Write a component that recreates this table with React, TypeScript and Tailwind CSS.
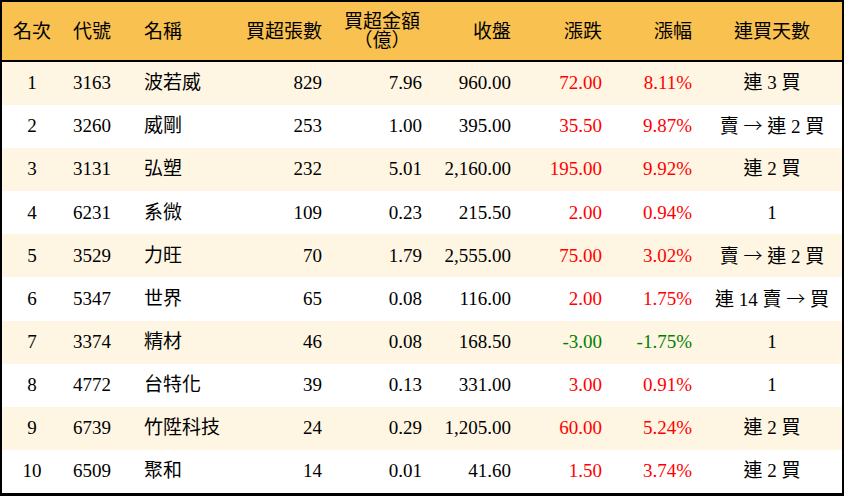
const rows = [
  { rank: "1", code: "3163", name: "波若威", lots: "829", amount: "7.96", close: "960.00", chg: "72.00", pct: "8.11%", streak: "連 3 買" },
  { rank: "2", code: "3260", name: "威剛", lots: "253", amount: "1.00", close: "395.00", chg: "35.50", pct: "9.87%", streak: "賣 → 連 2 買" },
  { rank: "3", code: "3131", name: "弘塑", lots: "232", amount: "5.01", close: "2,160.00", chg: "195.00", pct: "9.92%", streak: "連 2 買" },
  { rank: "4", code: "6231", name: "系微", lots: "109", amount: "0.23", close: "215.50", chg: "2.00", pct: "0.94%", streak: "1" },
  { rank: "5", code: "3529", name: "力旺", lots: "70", amount: "1.79", close: "2,555.00", chg: "75.00", pct: "3.02%", streak: "賣 → 連 2 買" },
  { rank: "6", code: "5347", name: "世界", lots: "65", amount: "0.08", close: "116.00", chg: "2.00", pct: "1.75%", streak: "連 14 賣 → 買" },
  { rank: "7", code: "3374", name: "精材", lots: "46", amount: "0.08", close: "168.50", chg: "-3.00", pct: "-1.75%", streak: "1" },
  { rank: "8", code: "4772", name: "台特化", lots: "39", amount: "0.13", close: "331.00", chg: "3.00", pct: "0.91%", streak: "1" },
  { rank: "9", code: "6739", name: "竹陞科技", lots: "24", amount: "0.29", close: "1,205.00", chg: "60.00", pct: "5.24%", streak: "連 2 買" },
  { rank: "10", code: "6509", name: "聚和", lots: "14", amount: "0.01", close: "41.60", chg: "1.50", pct: "3.74%", streak: "連 2 買" },
];

const cols = "grid grid-cols-[60px_71px_107px_92px_100px_89px_91px_90px_140px] items-center";

// the arrow is drawn full-width, like the CJK glyphs around it
function Streak({ text }: { text: string }) {
  const parts = text.split("→");
  return (
    <>
      {parts.map((p, i) => (
        <span key={i}>
          {i > 0 && <span className="font-['Noto_Sans_CJK_TC',sans-serif] font-light">→</span>}
          {p}
        </span>
      ))}
    </>
  );
}

export default function App() {
  return (
    <div className="w-[844px] h-[496px] flex flex-col border-2 border-b-[3px] border-black bg-white text-black text-[19px] font-['Liberation_Serif','Noto_Sans_CJK_TC',serif]">
      <div className={`${cols} h-[60px] shrink-0 border-b-2 border-black bg-[#f9c14f] leading-[19px]`}>
        <div className="text-center">名次</div>
        <div className="pl-[11px]">代號</div>
        <div className="pl-[11px]">名稱</div>
        <div className="pr-[10px] text-right">買超張數</div>
        <div className="text-center">
          <div>買超金額</div>
          <div>（億）</div>
        </div>
        <div className="pr-[10px] text-right">收盤</div>
        <div className="pr-[10px] text-right">漲跌</div>
        <div className="pr-[10px] text-right">漲幅</div>
        <div className="text-center">連買天數</div>
      </div>
      <div className="flex-1 flex flex-col">
        {rows.map((r, i) => {
          const up = !r.chg.startsWith("-");
          const tone = up ? "text-[#ff0000]" : "text-[#008000]";
          return (
            <div
              key={r.rank}
              className={`${cols} flex-1 ${i % 2 === 0 ? "bg-[#fef6e3]" : "bg-white"}`}
            >
              <div className="text-center">{r.rank}</div>
              <div className="pl-[11px]">{r.code}</div>
              <div className="pl-[11px]">{r.name}</div>
              <div className="pr-[10px] text-right">{r.lots}</div>
              <div className="pr-[10px] text-right">{r.amount}</div>
              <div className="pr-[10px] text-right">{r.close}</div>
              <div className={`pr-[10px] text-right ${tone}`}>{r.chg}</div>
              <div className={`pr-[10px] text-right ${tone}`}>{r.pct}</div>
              <div className="text-center whitespace-pre">
                <Streak text={r.streak} />
              </div>
            </div>
          );
        })}
      </div>
    </div>
  );
}
